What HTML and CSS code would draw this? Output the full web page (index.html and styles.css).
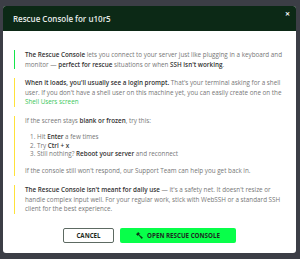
FILE: index.html
```html
<!DOCTYPE html>
<html lang="en">
<head>
    <meta charset="UTF-8">
    <title>Rescue Console</title>
    <link rel="stylesheet" href="styles.css">
</head>
<body>
    <div class="modal">
        <div class="modal-header">
            <span class="modal-title">Rescue Console for u10r5</span>
            <span class="modal-close">&#x2715;</span>
        </div>
        <div class="modal-body">
            <div class="note note-green">
                <p><b>The Rescue Console</b> lets you connect to your server just like plugging in a keyboard and monitor &mdash; <b>perfect for rescue</b> situations or when <b>SSH isn't working</b>.</p>
            </div>
            <div class="note">
                <p><b>When it loads, you'll usually see a login prompt.</b> That's your terminal asking for a shell user. If you don't have a shell user on this machine yet, you can easily create one on the <a href="#">Shell Users screen</a></p>
            </div>
            <div class="note">
                <p>If the screen stays <b>blank or frozen</b>, try this:</p>
                <ol>
                    <li>Hit <b>Enter</b> a few times</li>
                    <li>Try <b>Ctrl + x</b></li>
                    <li>Still nothing? <b>Reboot your server</b> and reconnect</li>
                </ol>
                <p>If the console still won't respond, our Support Team can help you get back in.</p>
            </div>
            <div class="note">
                <p><b>The Rescue Console isn't meant for daily use</b> &mdash; it's a safety net. It doesn't resize or handle complex input well. For your regular work, stick with WebSSH or a standard SSH client for the best experience.</p>
            </div>
        </div>
        <div class="modal-footer">
            <button class="btn btn-cancel">CANCEL</button>
            <button class="btn btn-open">
                <svg width="7" height="7" viewBox="0 0 16 16"><path d="M1 5 L5 1 L8 4 L6 6 L15 13 L13 15 L6 6 L4 8 Z" fill="#0d2a17" stroke="#0d2a17" stroke-width="1.5"/></svg>
                OPEN RESCUE CONSOLE
            </button>
        </div>
    </div>
</body>
</html>
```

FILE: styles.css
```css
body {
    margin: 0;
    background: #3c3e46;
    font-family: "Open Sans", Lato, sans-serif;
    width: 300px;
    height: 259px;
    overflow: hidden;
}
.modal {
    margin: 6px 4px 0 3px;
    background: #fff;
    border-radius: 3px;
    overflow: hidden;
    height: 247px;
    display: flex;
    flex-direction: column;
}
.modal-header {
    background: #0c2916;
    height: 25px;
    display: flex;
    align-items: center;
    justify-content: space-between;
    padding: 0 6px 0 10px;
    color: #fff;
}
.modal-title {
    font-size: 8px;
    font-weight: 600;
    color: #e8ece9;
}
.modal-close {
    font-size: 6px;
    font-weight: 700;
    align-self: flex-start;
    margin-top: 4px;
}
.modal-body {
    padding: 19px 4px 0 11px;
    display: flex;
    flex-direction: column;
    gap: 9px;
}
.note {
    border-left: 1px solid #ffe23a;
    padding: 0 0 0 10px;
    font-size: 6.3px;
    line-height: 9.6px;
    color: #777;
}
.note-green {
    border-left-color: #14e64b;
}
.note p {
    margin: 0;
}
.note b {
    font-weight: 600;
    color: #333;
}
.note a {
    color: #3cc75a;
    text-decoration: none;
}
.note ol {
    margin: 7.5px 0 7.5px 0;
    padding-left: 12px;
    line-height: 8.6px;
}
.modal-footer {
    display: flex;
    justify-content: center;
    gap: 6px;
    margin-top: auto;
    padding-bottom: 10px;
}
.btn {
    height: 15px;
    font-family: inherit;
    font-size: 6.2px;
    font-weight: 700;
    border-radius: 2px;
    display: flex;
    align-items: center;
    justify-content: center;
    gap: 4px;
    color: #1d2b22;
    cursor: pointer;
    padding: 0;
}
.btn-cancel {
    width: 51px;
    background: #fff;
    border: 1px solid #5d6a62;
}
.btn-open {
    width: 116px;
    background: #08ff4a;
    border: none;
}
```
